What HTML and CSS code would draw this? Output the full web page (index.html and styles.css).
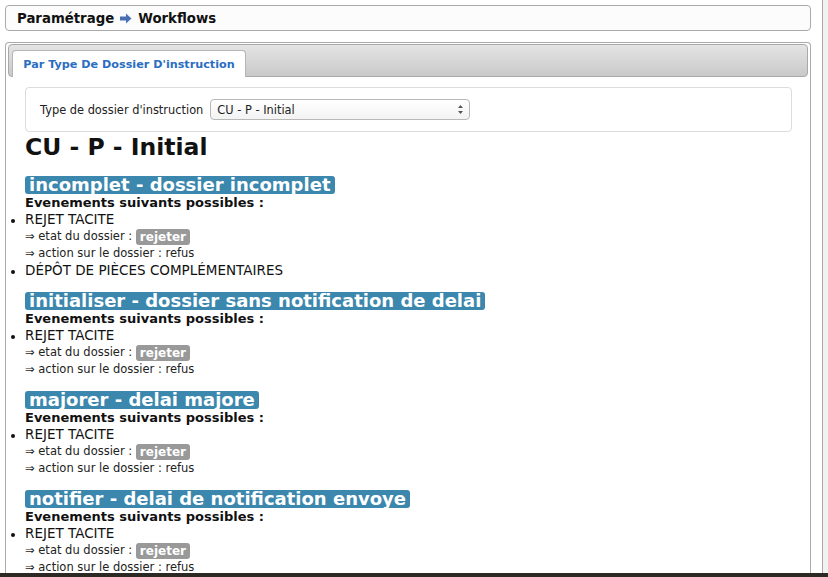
FILE: index.html
```html
<!DOCTYPE html>
<html lang="fr">
<head>
<meta charset="utf-8">
<title>Workflows</title>
<link rel="stylesheet" href="styles.css">
</head>
<body>
<div class="page">
  <div class="main">
    <div class="breadcrumb">Paramétrage <svg class="arrow" width="12" height="11" viewBox="0 0 12 11"><path d="M0 3.5h6V0.5l5.5 5-5.5 5v-3H0z" fill="#4a6fb3"/></svg> Workflows</div>
    <div class="panel">
      <div class="tabbar"><div class="tab">Par Type De Dossier D'instruction</div></div>
      <div class="panel-body">
        <div class="filter">
          <span class="filter-label">Type de dossier d'instruction</span>
          <div class="select"><span>CU - P - Initial</span><svg width="7" height="11" viewBox="0 0 7 11"><path d="M3.5 1 6 4H1z M3.5 10 6 7H1z" fill="#555"/></svg></div>
        </div>
        <h1 class="title">CU - P - Initial</h1>

        <div class="section">
          <h3 class="state">incomplet - dossier incomplet</h3>
          <div class="events-title">Evenements suivants possibles :</div>
          <ul class="events">
            <li><div class="ev-name">REJET TACITE</div>
              <div class="ev-line">⇒ etat du dossier : <span class="label">rejeter</span></div>
              <div class="ev-line">⇒ action sur le dossier : refus</div></li>
            <li><div class="ev-name">DÉPÔT DE PIÈCES COMPLÉMENTAIRES</div></li>
          </ul>
        </div>

        <div class="section">
          <h3 class="state">initialiser - dossier sans notification de delai</h3>
          <div class="events-title">Evenements suivants possibles :</div>
          <ul class="events">
            <li><div class="ev-name">REJET TACITE</div>
              <div class="ev-line">⇒ etat du dossier : <span class="label">rejeter</span></div>
              <div class="ev-line">⇒ action sur le dossier : refus</div></li>
          </ul>
        </div>

        <div class="section">
          <h3 class="state">majorer - delai majore</h3>
          <div class="events-title">Evenements suivants possibles :</div>
          <ul class="events">
            <li><div class="ev-name">REJET TACITE</div>
              <div class="ev-line">⇒ etat du dossier : <span class="label">rejeter</span></div>
              <div class="ev-line">⇒ action sur le dossier : refus</div></li>
          </ul>
        </div>

        <div class="section">
          <h3 class="state">notifier - delai de notification envoye</h3>
          <div class="events-title">Evenements suivants possibles :</div>
          <ul class="events">
            <li><div class="ev-name">REJET TACITE</div>
              <div class="ev-line">⇒ etat du dossier : <span class="label">rejeter</span></div>
              <div class="ev-line">⇒ action sur le dossier : refus</div></li>
          </ul>
        </div>
      </div>
    </div>
  </div>
  <div class="scrollcol"></div>
</div>
<div class="taskbar"></div>
</body>
</html>
```

FILE: styles.css
```css
html, body {
  margin: 0;
  padding: 0;
  height: 577px;
  overflow: hidden;
  background: #fff;
  font-family: "DejaVu Sans", Verdana, sans-serif;
  color: #111;
}
.page {
  display: flex;
  height: 577px;
}
.main {
  flex: 1;
  padding: 5px 11px 0 5px;
  display: flex;
  flex-direction: column;
  gap: 11px;
  min-width: 0;
}
.scrollcol {
  width: 5px;
  border-left: 1px solid #a8a8a8;
  background: #f2f2f2;
}
.breadcrumb {
  flex-shrink: 0;
  height: 24px;
  border: 1px solid #aaa;
  border-radius: 4px;
  background: #fcfcfc;
  padding-left: 11px;
  display: flex;
  align-items: center;
  gap: 5px;
  font-weight: bold;
  font-size: 13.3px;
  color: #111;
}
.arrow { margin: 0 1px; }
.panel {
  flex: 1;
  border: 1px solid #aaa;
  border-bottom: none;
  border-radius: 4px 4px 0 0;
  padding: 1px 2px 0 2px;
}
.tabbar {
  height: 31px;
  border: 1px solid #a9a9a9;
  border-radius: 4px;
  background: linear-gradient(#e4e4e4, #c9c9c9);
  display: flex;
  align-items: flex-end;
  padding-left: 3px;
}
.tab {
  width: 234px;
  height: 27px;
  box-sizing: border-box;
  background: #fff;
  border: 1px solid #b5b5b5;
  border-bottom: none;
  border-radius: 4px 4px 0 0;
  margin-bottom: -1px;
  color: #2a6ec1;
  font-weight: bold;
  font-size: 11.2px;
  display: flex;
  align-items: center;
  justify-content: center;
}
.panel-body {
  padding: 10px 16px 0 17px;
}
.filter {
  height: 43px;
  border: 1px solid #dcdcdc;
  border-radius: 4px;
  display: flex;
  align-items: center;
  padding-left: 14px;
  gap: 7px;
  font-size: 11.4px;
  color: #222;
}
.select {
  width: 260px;
  height: 21px;
  box-sizing: border-box;
  border: 1px solid #b8b8b8;
  border-radius: 4px;
  background: linear-gradient(#fff, #f3f3f3);
  display: flex;
  align-items: center;
  justify-content: space-between;
  padding: 0 5px 0 6px;
  font-size: 11.4px;
  color: #222;
}
.title {
  margin: 1px 0 0 0;
  font-size: 23.5px;
  line-height: 28px;
  font-weight: bold;
  color: #111;
}
.section {
  margin-top: 15px;
}
.section + .section {
  margin-top: 13px;
}
.state {
  display: inline-block;
  margin: 0;
  background: #3b87ad;
  color: #fff;
  font-size: 18px;
  line-height: 18px;
  padding: 0 4px 0 4px;
  border-radius: 3px;
  font-weight: bold;
}
.events-title {
  font-weight: bold;
  font-size: 13px;
  line-height: 16px;
  color: #111;
}
.events {
  margin: 0;
  padding: 0;
  list-style: disc outside;
  font-size: 13px;
  line-height: 17px;
}
.events li::marker {
  font-size: 12px;
}
.ev-name {
  font-size: 13.5px;
  line-height: 17px;
  color: #111;
}
.ev-line {
  font-size: 11.5px;
  line-height: 17px;
  color: #222;
}
.label {
  display: inline-block;
  background: #999;
  color: #fff;
  font-weight: bold;
  font-size: 12px;
  line-height: 16px;
  padding: 0 4px;
  border-radius: 3px;
  vertical-align: middle;
}
.taskbar {
  position: fixed;
  left: 0;
  right: 0;
  bottom: 0;
  height: 4px;
  background: #2c2823;
}
```
